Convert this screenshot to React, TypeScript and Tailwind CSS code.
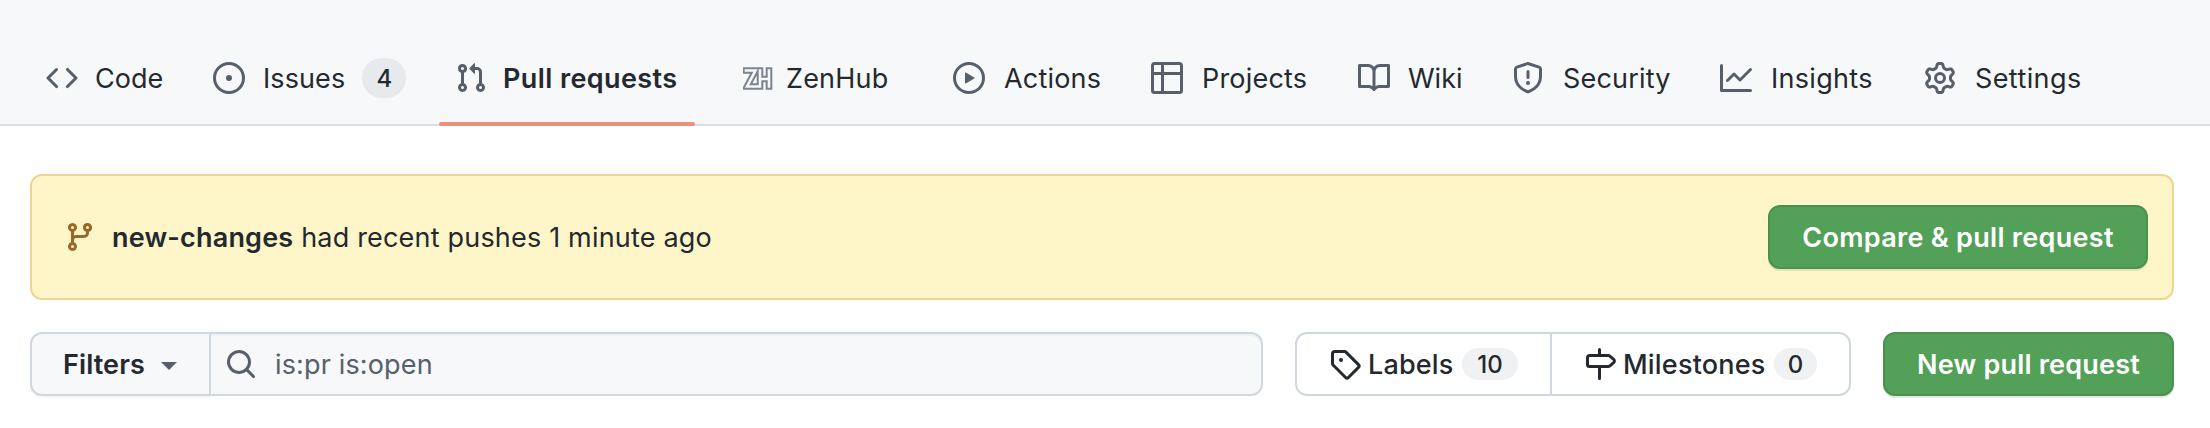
import type { ReactNode } from "react";

const paths = {
  code: "M4.72 3.22a.75.75 0 011.06 1.06L2.06 8l3.72 3.72a.75.75 0 11-1.06 1.06L.47 8.53a.75.75 0 010-1.06l4.25-4.25zm6.56 0a.75.75 0 10-1.06 1.06L13.94 8l-3.72 3.72a.75.75 0 101.06 1.06l4.25-4.25a.75.75 0 000-1.06l-4.25-4.25z",
  issue: "M8 9.5a1.5 1.5 0 100-3 1.5 1.5 0 000 3zM8 0a8 8 0 100 16A8 8 0 008 0zM1.5 8a6.5 6.5 0 1113 0 6.5 6.5 0 01-13 0z",
  pull: "M7.177 3.073L9.573.677A.25.25 0 0110 .854v4.792a.25.25 0 01-.427.177L7.177 3.427a.25.25 0 010-.354zM3.75 2.5a.75.75 0 100 1.5.75.75 0 000-1.5zm-2.25.75a2.25 2.25 0 113 2.122v5.256a2.251 2.251 0 11-1.5 0V5.372A2.25 2.25 0 011.5 3.25zM11 2.5h-1V4h1a1 1 0 011 1v5.628a2.251 2.251 0 101.5 0V5A2.5 2.5 0 0011 2.5zm1 10.25a.75.75 0 111.5 0 .75.75 0 01-1.5 0zM3.75 12a.75.75 0 100 1.5.75.75 0 000-1.5z",
  play: "M1.5 8a6.5 6.5 0 1113 0 6.5 6.5 0 01-13 0zM8 0a8 8 0 100 16A8 8 0 008 0zM6.379 5.227A.25.25 0 006 5.442v5.117a.25.25 0 00.379.214l4.264-2.559a.25.25 0 000-.428L6.379 5.227z",
  table: "M0 1.75C0 .784.784 0 1.75 0h12.5C15.216 0 16 .784 16 1.75v12.5A1.75 1.75 0 0114.25 16H1.75A1.75 1.75 0 010 14.25V1.75zM1.5 6.5v7.75c0 .138.112.25.25.25H5v-8H1.5zM5 5H1.5V1.75a.25.25 0 01.25-.25H5V5zm1.5 1.5v8h7.75a.25.25 0 00.25-.25V6.5h-8zM14.5 5h-8V1.5h7.75a.25.25 0 01.25.25V5z",
  book: "M0 1.75A.75.75 0 01.75 1h4.253c1.227 0 2.317.59 3 1.501A3.744 3.744 0 0111.006 1h4.245a.75.75 0 01.75.75v10.5a.75.75 0 01-.75.75h-4.507a2.25 2.25 0 00-1.591.659l-.622.621a.75.75 0 01-1.06 0l-.622-.621A2.25 2.25 0 005.258 13H.75a.75.75 0 01-.75-.75V1.75zm8.755 3a2.25 2.25 0 012.25-2.25H14.5v9h-3.757c-.71 0-1.4.201-1.992.572l.004-7.322zm-1.504 7.324l.004-5.073-.002-2.253A2.25 2.25 0 005.003 2.5H1.5v9h3.757a3.75 3.75 0 011.994.574z",
  shield: "M7.467.133a1.75 1.75 0 011.066 0l5.25 1.68A1.75 1.75 0 0115 3.48V7c0 1.566-.32 3.182-1.303 4.682-.983 1.498-2.585 2.813-5.032 3.855a1.7 1.7 0 01-1.33 0c-2.447-1.042-4.049-2.357-5.032-3.855C1.32 10.182 1 8.566 1 7V3.48a1.75 1.75 0 011.217-1.667l5.25-1.68zm.61 1.429a.25.25 0 00-.153 0l-5.25 1.68a.25.25 0 00-.174.238V7c0 1.358.275 2.666 1.057 3.86.784 1.194 2.121 2.34 4.366 3.297a.2.2 0 00.154 0c2.245-.956 3.582-2.104 4.366-3.298C13.225 9.666 13.5 8.36 13.5 7V3.48a.25.25 0 00-.174-.237l-5.25-1.68zM9 10.5a1 1 0 11-2 0 1 1 0 012 0zm-.25-5.75a.75.75 0 10-1.5 0v3a.75.75 0 001.5 0v-3z",
  graph: "M1.5 1.75a.75.75 0 00-1.5 0v12.5c0 .414.336.75.75.75h14.5a.75.75 0 000-1.5H1.5V1.75zm14.28 2.53a.75.75 0 00-1.06-1.06L10 7.94 7.53 5.47a.75.75 0 00-1.06 0L3.22 8.72a.75.75 0 001.06 1.06L7 7.06l2.47 2.47a.75.75 0 001.06 0l5.25-5.25z",
  gear: "M7.429 1.525a6.593 6.593 0 011.142 0c.036.003.108.036.137.146l.289 1.105c.147.56.55.967.997 1.189.174.086.341.183.501.29.417.278.97.423 1.53.27l1.102-.303c.11-.03.175.016.195.046.219.31.41.641.573.989.014.031.022.11-.059.19l-.815.806c-.411.406-.562.957-.53 1.456a4.588 4.588 0 010 .582c-.032.499.119 1.05.53 1.456l.815.806c.08.08.073.159.059.19a6.494 6.494 0 01-.573.99c-.02.029-.086.074-.195.045l-1.103-.303c-.559-.153-1.112-.008-1.529.27-.16.107-.327.204-.5.29-.449.222-.851.628-.998 1.189l-.289 1.105c-.029.11-.101.143-.137.146a6.613 6.613 0 01-1.142 0c-.036-.003-.108-.037-.137-.146l-.289-1.105c-.147-.56-.55-.967-.997-1.189a4.502 4.502 0 01-.501-.29c-.417-.278-.97-.423-1.53-.27l-1.102.303c-.11.03-.175-.016-.195-.046a6.492 6.492 0 01-.573-.989c-.014-.031-.022-.11.059-.19l.815-.806c.411-.406.562-.957.53-1.456a4.587 4.587 0 010-.582c.032-.499-.119-1.05-.53-1.456l-.815-.806c-.08-.08-.073-.159-.059-.19a6.44 6.44 0 01.573-.99c.02-.029.086-.075.195-.045l1.103.303c.559.153 1.112.008 1.529-.27.16-.107.327-.204.5-.29.449-.222.851-.628.998-1.189l.289-1.105c.029-.11.101-.143.137-.146zM8 0c-.236 0-.47.01-.701.03-.743.065-1.29.615-1.458 1.261l-.29 1.106c-.017.066-.078.158-.211.224a5.994 5.994 0 00-.668.386c-.123.082-.233.09-.3.071L3.27 2.776c-.644-.177-1.392.02-1.82.63a7.977 7.977 0 00-.704 1.217c-.315.675-.111 1.422.363 1.891l.815.806c.05.048.098.147.088.294a6.084 6.084 0 000 .772c.01.147-.038.246-.088.294l-.815.806c-.474.469-.678 1.216-.363 1.891.2.428.436.835.704 1.218.428.609 1.176.806 1.82.63l1.103-.303c.066-.019.176-.011.299.071.213.143.436.272.668.386.133.066.194.158.212.224l.289 1.106c.169.646.715 1.196 1.458 1.26a8.094 8.094 0 001.402 0c.743-.064 1.29-.614 1.458-1.26l.29-1.106c.017-.066.078-.158.211-.224a5.98 5.98 0 00.668-.386c.123-.082.233-.09.3-.071l1.102.302c.644.177 1.392-.02 1.82-.63.268-.382.505-.789.704-1.217.315-.675.111-1.422-.364-1.891l-.814-.806c-.05-.048-.098-.147-.088-.294a6.1 6.1 0 000-.772c-.01-.147.039-.246.088-.294l.814-.806c.475-.469.679-1.216.364-1.891a7.992 7.992 0 00-.704-1.218c-.428-.609-1.176-.806-1.82-.63l-1.103.303c-.066.019-.176.011-.299-.071a5.991 5.991 0 00-.668-.386c-.133-.066-.194-.158-.212-.224L10.16 1.29C9.99.645 9.444.095 8.701.031A8.094 8.094 0 008 0zm1.5 8a1.5 1.5 0 11-3 0 1.5 1.5 0 013 0zM11 8a3 3 0 11-6 0 3 3 0 016 0z",
  branch: "M11.75 2.5a.75.75 0 100 1.5.75.75 0 000-1.5zm-2.25.75a2.25 2.25 0 113 2.122V6A2.5 2.5 0 0110 8.5H6a1 1 0 00-1 1v1.128a2.251 2.251 0 11-1.5 0V5.372a2.25 2.25 0 111.5 0v1.836A2.492 2.492 0 016 7h4a1 1 0 001-1v-.628A2.25 2.25 0 019.5 3.25zM4.25 12a.75.75 0 100 1.5.75.75 0 000-1.5zM3.5 3.25a.75.75 0 111.5 0 .75.75 0 01-1.5 0z",
  search: "M11.5 7a4.499 4.499 0 11-8.998 0A4.499 4.499 0 0111.5 7zm-.82 4.74a6 6 0 111.06-1.06l3.04 3.04a.75.75 0 11-1.06 1.06l-3.04-3.04z",
  tag: "M2.5 7.775V2.75a.25.25 0 01.25-.25h5.025a.25.25 0 01.177.073l6.25 6.25a.25.25 0 010 .354l-5.025 5.025a.25.25 0 01-.354 0l-6.25-6.25a.25.25 0 01-.073-.177zm-1.5 0V2.75C1 1.784 1.784 1 2.75 1h5.025c.464 0 .91.184 1.238.513l6.25 6.25a1.75 1.75 0 010 2.474l-5.026 5.026a1.75 1.75 0 01-2.474 0l-6.25-6.25A1.75 1.75 0 011 7.775zM6 5a1 1 0 100 2 1 1 0 000-2z",
  milestone: "M7.75 0a.75.75 0 01.75.75V3h3.634c.414 0 .814.147 1.13.414l2.07 1.75a1.75 1.75 0 010 2.672l-2.07 1.75a1.75 1.75 0 01-1.13.414H8.5v5.25a.75.75 0 11-1.5 0V10H2.75A1.75 1.75 0 011 8.25v-3.5C1 3.784 1.784 3 2.75 3H7V.75A.75.75 0 017.75 0zm0 8.5h4.384a.25.25 0 00.161-.06l2.07-1.75a.25.25 0 000-.38l-2.07-1.75a.25.25 0 00-.161-.06H2.75a.25.25 0 00-.25.25v3.5c0 .138.112.25.25.25h5z",
};

function Icon({ name, className = "" }: { name: keyof typeof paths; className?: string }) {
  return (
    <svg viewBox="0 0 16 16" className={`size-8 shrink-0 ${className}`} fill="currentColor" fillRule="evenodd" aria-hidden="true">
      <path d={paths[name]} />
    </svg>
  );
}

function ZenHubLogo() {
  const monogram = "M3 3.5H12.5L4 19.5H17M17 3.5V19.5M17 12H26M26 3.5V19.5";
  return (
    <svg viewBox="0 0 30 23" className="h-[23px] w-[30px] shrink-0" fill="none" strokeLinecap="square" aria-hidden="true">
      <path d={monogram} stroke="#7d848e" strokeWidth="6.6" />
      <path d={monogram} stroke="#f6f8fa" strokeWidth="2.6" />
    </svg>
  );
}

interface TabProps {
  icon: ReactNode;
  label: string;
  width: string;
  text?: string;
  count?: number;
}

function Tab({ icon, label, width, text = "ml-[19px] tracking-[0.2px]", count }: TabProps) {
  return (
    <a className={`flex h-full shrink-0 items-center ${width}`}>
      {icon}
      <span className={`pt-0.5 ${text}`}>{label}</span>
      {count !== undefined && (
        <span className="ml-[17px] flex h-10 w-11 items-center justify-center rounded-full bg-[#e7eaed] pt-0.5 text-[24px] font-medium">{count}</span>
      )}
    </a>
  );
}

export default function App() {
  return (
    <div className="h-[428px] w-[2210px] overflow-hidden bg-white font-['Inter',sans-serif] text-[27px] leading-10 whitespace-nowrap text-[#24292f]">
      <header className="h-[126px] border-b-2 border-[#d8dee4] bg-[#f6f8fa] pt-8">
        <nav className="flex h-[94px] pl-[46px] text-[#57606a] [&_span]:text-[#24292f]">
          <div className="flex h-[92px]">
            <Tab icon={<Icon name="code" />} label="Code" width="w-[167px]" text="ml-[17px]" />
            <Tab icon={<Icon name="issue" />} label="Issues" width="w-[226px]" text="ml-[18px] tracking-[0.1px]" count={4} />
          </div>
          <div className="h-[94px] w-64 shrink-0">
            <div className="flex h-[90px] items-center pt-0.5 pl-4">
              <Icon name="pull" />
              <span className="ml-4 pt-0.5 font-semibold tracking-[0.4px]">Pull requests</span>
            </div>
            <div className="h-1 rounded-full bg-[#ee8f7c]" />
          </div>
          <div className="flex h-[92px] pl-12">
            <Tab icon={<ZenHubLogo />} label="ZenHub" width="w-[210px]" text="ml-[13px] tracking-[0.2px]" />
            <Tab icon={<Icon name="play" />} label="Actions" width="w-[198px]" />
            <Tab icon={<Icon name="table" />} label="Projects" width="w-[207px]" />
            <Tab icon={<Icon name="book" />} label="Wiki" width="w-[154px]" text="ml-[18px]" />
            <Tab icon={<Icon name="shield" />} label="Security" width="w-[208px]" />
            <Tab icon={<Icon name="graph" />} label="Insights" width="w-[204px]" text="ml-[19px] tracking-[0.3px]" />
            <Tab icon={<Icon name="gear" />} label="Settings" width="w-[160px]" text="ml-[19px] tracking-[0.4px]" />
          </div>
        </nav>
      </header>

      <main className="pt-12 pr-9 pl-[30px]">
        <section className="flex h-[126px] items-center rounded-xl border-2 border-[#ead793] bg-[#fef6c9] pr-6 pl-8">
          <Icon name="branch" className="text-[#9a6726]" />
          <p className="ml-4 grow pt-0.5 tracking-[0.19px]">
            <strong className="font-semibold">new-changes</strong> had recent pushes 1 minute ago
          </p>
          <button className="h-16 w-[380px] rounded-xl border-2 border-[#4a9150] bg-[#53a158] pt-0.5 font-semibold tracking-[0.3px] text-white shadow-[0_2px_0_rgba(27,31,36,0.1)]">
            Compare &amp; pull request
          </button>
        </section>

        <section className="mt-8 flex h-16">
          <button className="flex w-[181px] items-center rounded-l-xl border-2 border-[#d0d7de] bg-[#f6f8fa] pl-[31px] font-semibold shadow-[0_2px_0_rgba(27,31,36,0.04)]">
            <span className="pt-0.5 tracking-[0.1px]">Filters</span>
            <svg viewBox="0 0 16 8" className="mt-1 ml-4 h-2 w-4" fill="#57606a" aria-hidden="true">
              <path d="M0 0H16L8 8Z" />
            </svg>
          </button>
          <div className="flex w-[1052px] items-center rounded-r-xl border-2 border-l-0 border-[#d0d7de] bg-[#f6f8fa] pl-3.5 text-[#57606a] shadow-[inset_0_2px_0_rgba(208,215,222,0.2)]">
            <Icon name="search" />
            <span className="ml-[18px] pt-0.5 tracking-[0.15px]">is:pr is:open</span>
          </div>
          <div className="ml-8 flex w-[556px] rounded-xl border-2 border-[#d0d7de] font-medium">
            <a className="flex w-[255px] items-center border-r-2 border-[#d0d7de] pl-8">
              <Icon name="tag" />
              <span className="ml-[7px] w-[87px] pt-0.5 tracking-[0.15px]">Labels</span>
              <span className="ml-[7px] flex h-8 w-14 items-center justify-center rounded-full bg-[#eff1f3] pt-0.5 text-[24px]">10</span>
            </a>
            <a className="flex grow items-center pl-8">
              <Icon name="milestone" />
              <span className="ml-[7px] w-[143px] pt-0.5 tracking-[0.2px]">Milestones</span>
              <span className="ml-2 flex h-8 w-[43px] items-center justify-center rounded-full bg-[#eff1f3] pt-0.5 text-[24px]">0</span>
            </a>
          </div>
          <button className="ml-8 w-[291px] rounded-xl border-2 border-[#4a9150] bg-[#53a158] pt-0.5 font-semibold tracking-[0.2px] text-white shadow-[0_2px_0_rgba(27,31,36,0.1)]">
            New pull request
          </button>
        </section>
      </main>
    </div>
  );
}
